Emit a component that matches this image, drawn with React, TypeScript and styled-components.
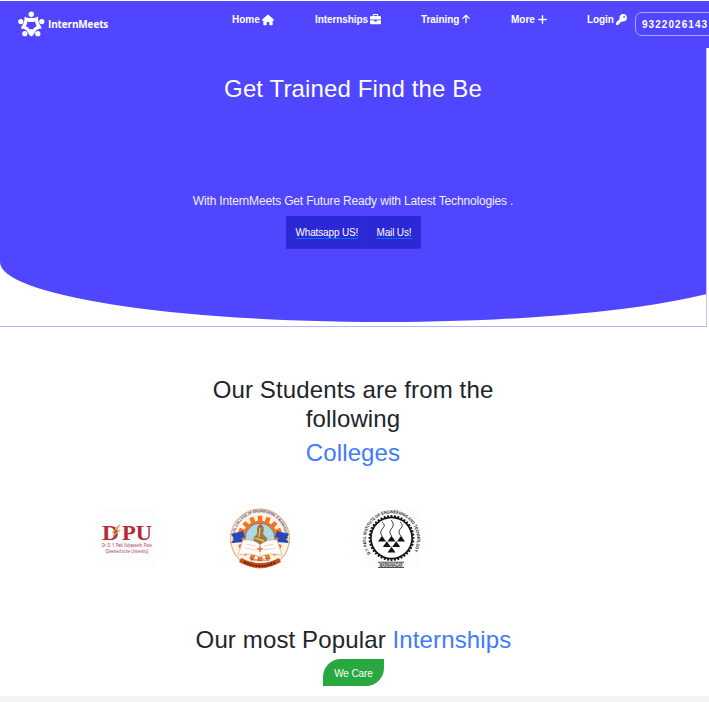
import React from 'react';
import styled, { createGlobalStyle } from 'styled-components';
import { FaHouse, FaBriefcase, FaArrowUp, FaPlus, FaKey } from 'react-icons/fa6';

const GlobalStyle = createGlobalStyle`
  * { box-sizing: border-box; }
  body {
    margin: 0;
    background: #fff;
    color: #212529;
    font-family: "Liberation Sans", Arial, sans-serif;
    overflow: hidden;
  }
`;

const Page = styled.div`
  width: 709px;
  height: 702px;
  padding-top: 1px;
  overflow: hidden;
`;

const Header = styled.header`
  height: 47px;
  background: #5146ff;
  display: flex;
  align-items: flex-start;
  color: #fff;
`;

const Brand = styled.div`
  width: 232px;
  flex: none;
  display: flex;
  align-items: center;
  padding: 9px 0 0 17px;
  gap: 3px;
`;

const BrandName = styled.span`
  font: 700 10px/14px "Open Sans", sans-serif;
  letter-spacing: -0.15px;
`;

const Nav = styled.nav`
  display: flex;
  flex: none;
`;

const NavItem = styled.a<{ $width: number; $tracking?: number }>`
  width: ${(p) => p.$width}px;
  flex: none;
  display: flex;
  gap: 2px;
  padding-top: 13px;
  font-size: 10px;
  font-weight: 700;
  line-height: 12px;
  letter-spacing: ${(p) => p.$tracking ?? 0}px;
  white-space: nowrap;
  svg { flex: none; }
`;

const Phone = styled.a`
  flex: none;
  width: 90px;
  height: 24px;
  margin-top: 11px;
  padding-left: 6px;
  border: 1px solid #aaa5ff;
  border-radius: 7px;
  font-size: 10px;
  font-weight: 700;
  line-height: 23px;
  letter-spacing: 1.05px;
`;

const HeroFrame = styled.section`
  width: 707px;
  height: 279px;
  border-right: 1px solid #c5c1ff;
  border-bottom: 1px solid #b5b0ff;
  overflow: hidden;
`;

const HeroCurve = styled.div`
  width: 766px;
  height: 274px;
  background: #5146ff;
  border-radius: 0 0 50% 50% / 0 0 60px 60px;
`;

const HeroContent = styled.div`
  width: 706px;
  display: flex;
  flex-direction: column;
  align-items: center;
  color: #fff;
  padding-top: 26px;
`;

const HeroTitle = styled.h1`
  margin: 0;
  height: 118px;
  font-size: 24px;
  font-weight: 400;
  line-height: 29px;
  letter-spacing: 0.13px;
`;

const HeroText = styled.p`
  margin: 0;
  font-size: 12px;
  line-height: 18px;
  letter-spacing: -0.16px;
  color: #f0efff;
  height: 24px;
`;

const ButtonGroup = styled.div`
  display: flex;
  height: 33px;
  width: 135px;
  border: 1px solid #342cdd;
  border-top-color: #2a29d5;
  border-left-color: #2a29d5;
  background: #2a29d5;
`;

const ContactLink = styled.a<{ $width: number }>`
  width: ${(p) => p.$width}px;
  padding-left: 9px;
  line-height: 32px;
  font-size: 10px;
  letter-spacing: -0.15px;
  white-space: nowrap;
  text-decoration: underline #0d6efd 1px;
  text-underline-offset: 2px;
  text-decoration-skip-ink: none;
  & + & { border-left: 1px solid #302cdb; }
`;

const Colleges = styled.section`
  height: 283px;
  padding-top: 48px;
`;

const Heading = styled.h2`
  width: 300px;
  margin: 0 auto 5px 203px;
  font-size: 24px;
  font-weight: 400;
  line-height: 29px;
  letter-spacing: 0.13px;
  text-align: center;
`;

const Accent = styled.span`
  color: #407bff;
`;

const LogoRow = styled.div`
  display: flex;
  gap: 70px;
  padding: 35px 0 0 95px;
  svg { display: block; flex: none; overflow: visible; }
`;

const Popular = styled.section`
  height: 86px;
  width: 707px;
  display: flex;
  flex-direction: column;
  align-items: center;
  padding-top: 15px;
`;

const PopularHeading = styled(Heading)`
  width: auto;
  margin: 0;
  height: 34px;
`;

const CareBadge = styled.div`
  width: 61px;
  height: 27px;
  background: #28a83e;
  border-radius: 18px 0;
  color: #fff;
  font-size: 10px;
  line-height: 29px;
  letter-spacing: -0.1px;
  text-align: center;
`;

const FooterBand = styled.div`
  height: 10px;
  background: #f6f2f2;
`;

const point = (cx: number, cy: number, r: number, deg: number) => {
  const a = (deg * Math.PI) / 180;
  return [cx + r * Math.cos(a), cy + r * Math.sin(a)];
};

const toothed = (cx: number, cy: number, outer: number, inner: number, n: number) => {
  const step = 360 / n;
  return Array.from({ length: n })
    .flatMap((_, i) => {
      const a = -90 + i * step;
      return [
        point(cx, cy, inner, a - step * 0.32),
        point(cx, cy, outer, a - step * 0.24),
        point(cx, cy, outer, a + step * 0.24),
        point(cx, cy, inner, a + step * 0.32),
      ];
    })
    .map((p) => p.join(','))
    .join(' ');
};

function PeopleMark() {
  return (
    <svg width="28" height="28" viewBox="0 0 28 28" fill="#fff">
      <circle cx="14.3" cy="4.2" r="2.7" />
      <circle cx="3.8" cy="11.6" r="2.6" />
      <circle cx="24.8" cy="11.6" r="2.6" />
      <circle cx="7.8" cy="23.7" r="2.6" />
      <circle cx="20.8" cy="23.7" r="2.6" />
      <path
        d="M7.7 6.4 Q11 8.6 14.3 7.8 Q17.6 8.6 20.9 6.4 Q21 11.6 22.4 14.1 Q23.8 15.8 24.8 18.6 Q19.4 19 18.2 21.8 Q16.6 25.7 14.3 26.4 Q12 25.7 10.4 21.8 Q9.2 19 3.8 18.6 Q4.8 15.8 6.2 14.1 Q7.6 11.6 7.7 6.4Z M10.5 11.6 Q10.2 14.3 8.8 16.3 Q11.6 17 12.7 19.6 Q14.3 18.6 15.9 19.6 Q17 17 19.8 16.3 Q18.4 14.3 18.1 11.6 Q14.3 12.6 10.5 11.6Z"
        fillRule="evenodd"
      />
    </svg>
  );
}

function DpuLogo() {
  return (
    <svg width="64" height="62" viewBox="0 0 64 62" textAnchor="middle">
      <rect x="3" y="1" width="58" height="60" fill="#fdfdfd" />
      <g fill="#b52a3a" fontFamily="Liberation Serif, serif" fontWeight="700" fontSize="22">
        <text x="7" y="33" textAnchor="start" textLength="17" lengthAdjust="spacingAndGlyphs">D</text>
        <text x="27" y="33" textAnchor="start" textLength="30" lengthAdjust="spacingAndGlyphs">PU</text>
      </g>
      <path d="M17 26 L24 20 M18 29 L25 23 M20 22 L25 18" stroke="#d5ad56" strokeWidth="1.4" />
      <g fill="#a5404f" fontFamily="Liberation Sans, sans-serif" fontSize="4.6">
        <text x="32" y="40.3" textLength="50" lengthAdjust="spacingAndGlyphs">Dr. D. Y. Patil Vidyapeeth, Pune</text>
        <text x="32" y="46.3" textLength="43" lengthAdjust="spacingAndGlyphs">(Deemed to be University)</text>
      </g>
    </svg>
  );
}

function EngineeringSeal() {
  return (
    <svg width="62" height="64" viewBox="0 0 62 64">
      <defs>
        <path id="sealArc" d="M6.4 36 A25.2 25.2 0 1 1 55.6 36" />
      </defs>
      <circle cx="31" cy="31.5" r="29.5" fill="#fff3e4" stroke="#d69a50" strokeWidth="0.9" />
      <polygon points={toothed(31, 31.5, 22.8, 18, 16)} fill="#f47521" />
      <circle cx="31" cy="31" r="14.8" fill="#aed9df" stroke="#476789" strokeWidth="0.7" />
      <path d="M24 40 L25 30 L28 27 L28 21 L31 18 L35 22 L34 27 L38 31 L39 42Z" fill="#9d793d" />
      <path d="M26 31 L35 34 M31 21 L30 30" stroke="#dfc07c" strokeWidth="1.4" />
      <path d="M28 20 L31.5 16.5 L35 21Z" fill="#c75b31" />
      <path d="M2 27 L14 24 L16 30 L12 31 L15 35 L2 36 L5 32Z M60 27 L48 24 L46 30 L50 31 L47 35 L60 36 L57 32Z" fill="#2546bd" />
      <text fill="#49448c" fontSize="3.9" fontWeight="700" fontFamily="Liberation Sans, sans-serif">
        <textPath href="#sealArc" textLength="88" lengthAdjust="spacingAndGlyphs">D.Y. PATIL COLLEGE OF ENGINEERING &amp; MANAGEMENT</textPath>
      </text>
      <path d="M9 48 L14 33 Q25 32 31 38 Q38 32 48 33 L53 48 Q39 45 31 50 Q21 45 9 48Z" fill="#fff" stroke="#e4b59d" strokeWidth="0.8" />
      <path d="M31 38 V49 M17 37 L27 39 M16 41 L27 43 M35 39 L45 37 M35 43 L47 41" stroke="#efc2ad" strokeWidth="0.8" />
      <path d="M28 42 H34 M31 39 V45" stroke="#f07131" strokeWidth="1.4" />
      <path d="M12 51 Q31 61 50 51 L52 55 Q31 67 10 55Z" fill="#c84d18" />
      <path d="M15 55 Q31 63 47 55" fill="none" stroke="#65210f" strokeWidth="2" strokeDasharray="2 1" />
      <text x="31" y="53.5" textAnchor="middle" fontSize="4" fill="#374058" fontFamily="Liberation Sans, sans-serif">Estd. 2012</text>
    </svg>
  );
}

const flames: [number, number][] = [[21, 32], [30.5, 32], [40, 32], [25.8, 37.5], [35.2, 37.5], [30.5, 43]];

function TechnologySeal() {
  return (
    <svg width="62" height="64" viewBox="0 0 62 64">
      <defs>
        <path id="techArc" d="M9.5 46.5 A25.6 25.6 0 1 1 51.5 46.5" />
      </defs>
      <rect x="1" y="1" width="57" height="60" fill="#fdfdfd" />
      <text fill="#222" fontSize="4.4" fontWeight="700" fontFamily="Liberation Sans, sans-serif">
        <textPath href="#techArc" textLength="108" lengthAdjust="spacingAndGlyphs">D.Y. PATIL INSTITUTE OF ENGINEERING AND TECHNOLOGY</textPath>
      </text>
      <polygon points={toothed(30.5, 31, 23, 21.4, 40)} fill="#161616" />
      <circle cx="30.5" cy="31" r="19.8" fill="#fff" />
      {flames.map(([x, y]) => (
        <path key={`${x}-${y}`} d={`M${x - 4} ${y + 2.4} L${x} ${y - 3.2} L${x + 4} ${y + 2.4}Z`} fill="#111" />
      ))}
      <path
        d="M21 29 Q18 25 22 21 Q25 18 21 15 M30.5 29 Q27 25 31 21 Q34 17 30 13 M40 29 Q36 25 40 21 Q43 18 39 15"
        fill="none"
        stroke="#444"
        strokeWidth="1"
      />
      <path d="M17 55.2 H43 M17 60.5 H43" stroke="#222" strokeWidth="0.8" />
      <text x="30" y="59.5" textAnchor="middle" textLength="23" lengthAdjust="spacingAndGlyphs" fontSize="4.6" fontWeight="700" fill="#222" fontFamily="Liberation Sans, sans-serif">WARNANAGAR</text>
    </svg>
  );
}

export default function App() {
  return (
    <>
      <GlobalStyle />
      <Page>
        <Header>
          <Brand>
            <PeopleMark />
            <BrandName>InternMeets</BrandName>
          </Brand>
          <Nav>
            <NavItem $width={83}>Home <FaHouse size={12} /></NavItem>
            <NavItem $width={106} $tracking={-0.08}>Internships <FaBriefcase size={11} /></NavItem>
            <NavItem $width={90} $tracking={-0.08}>Training <FaArrowUp size={10} /></NavItem>
            <NavItem $width={76}>More <FaPlus size={11} /></NavItem>
            <NavItem $width={48} $tracking={-0.08}>Login <FaKey size={11} /></NavItem>
          </Nav>
          <Phone>9322026143</Phone>
        </Header>
        <HeroFrame>
          <HeroCurve>
            <HeroContent>
              <HeroTitle>Get Trained Find the Be</HeroTitle>
              <HeroText>With InternMeets Get Future Ready with Latest Technologies .</HeroText>
              <ButtonGroup>
                <ContactLink $width={80}>Whatsapp US!</ContactLink>
                <ContactLink $width={53}>Mail Us!</ContactLink>
              </ButtonGroup>
            </HeroContent>
          </HeroCurve>
        </HeroFrame>
        <Colleges>
          <Heading>Our Students are from the following</Heading>
          <Heading><Accent>Colleges</Accent></Heading>
          <LogoRow>
            <DpuLogo />
            <EngineeringSeal />
            <TechnologySeal />
          </LogoRow>
        </Colleges>
        <Popular>
          <PopularHeading>Our most Popular <Accent>Internships</Accent></PopularHeading>
          <CareBadge>We Care</CareBadge>
        </Popular>
        <FooterBand />
      </Page>
    </>
  );
}
